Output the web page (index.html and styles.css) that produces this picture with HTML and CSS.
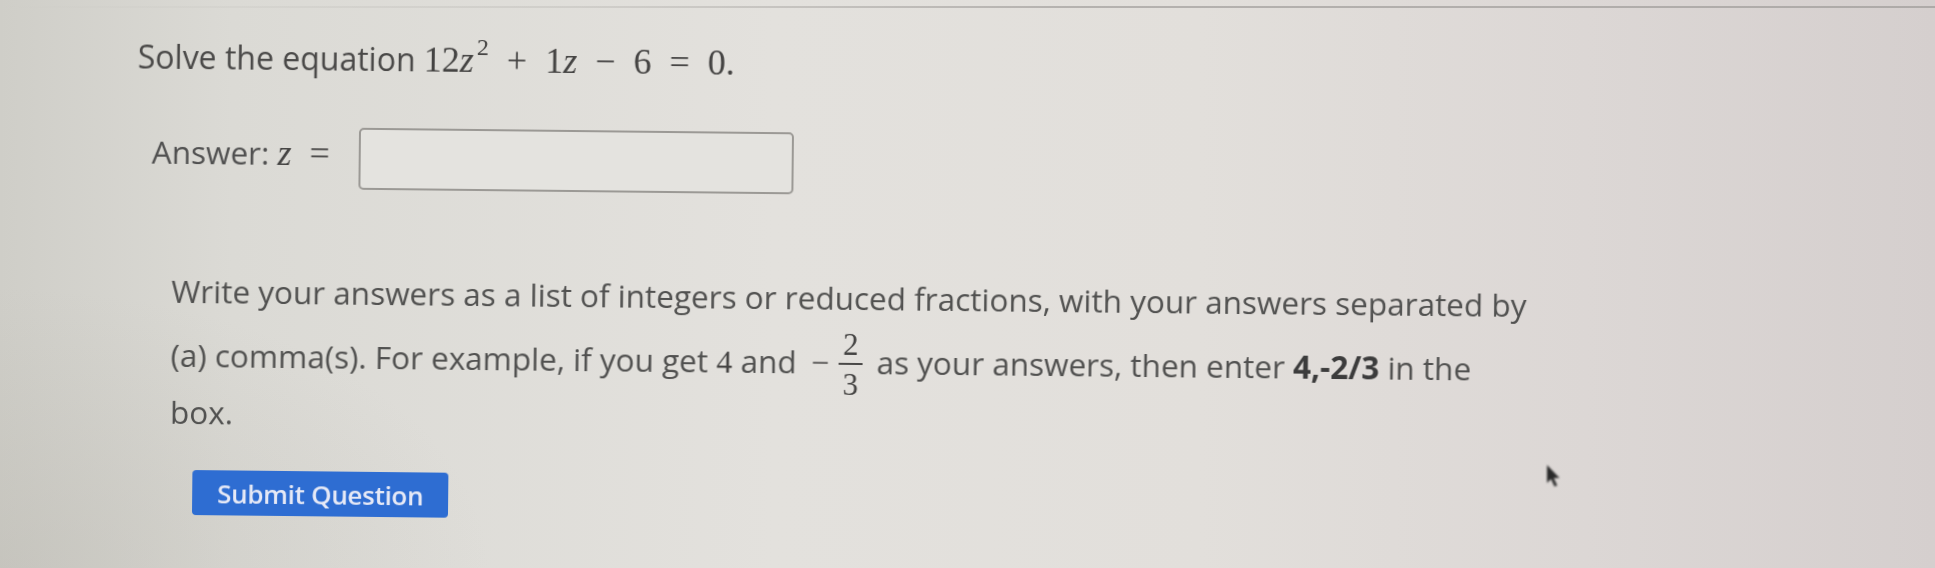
FILE: index.html
```html
<!DOCTYPE html>
<html lang="en">
<head>
<meta charset="utf-8">
<title>Solve the equation</title>
<link rel="stylesheet" href="styles.css">
</head>
<body>
<div class="page">
  <div class="topline"></div>
  <main class="question">
    <p class="prompt">Solve the equation <span class="math"><span class="mn">12</span><span class="mi">z</span><span class="sup">2</span><span class="mo">+</span><span class="mn">1</span><span class="mi">z</span><span class="mo">−</span><span class="mn">6</span><span class="mo">=</span><span class="mn">0</span>.</span></p>
    <div class="answer-row">
      <span class="label">Answer: <span class="math"><span class="mi">z</span><span class="mo">=</span></span></span>
      <input class="answer-box" type="text" aria-label="Answer">
    </div>
    <p class="help">Write your answers as a list of integers or reduced fractions, with your answers separated by<br>(a) comma(s). For example, if you get <span class="math"><span class="mn">4</span></span> and <span class="math"><span class="mo neg">−</span><span class="frac"><span class="num">2</span><span class="den">3</span></span></span> as your answers, then enter <b>4,-2/3</b> in the<br>box.</p>
    <button class="submit" type="button">Submit Question</button>
  </main>
  <svg class="cursor" width="16" height="25" viewBox="0 0 16 25" aria-hidden="true">
    <path d="M1 1 L1 19 L5 15 L8.5 22.5 L11.2 21.4 L7.8 14 L13.5 14 Z" fill="#2a2a2a"/>
  </svg>
</div>
</body>
</html>
```
FILE: styles.css
```css
html, body {
  margin: 0;
  padding: 0;
}
body {
  width: 1935px;
  height: 568px;
  overflow: hidden;
  font-family: "Open Sans", "Liberation Sans", sans-serif;
  color: #4d4c4b;
}
.page {
  position: relative;
  width: 1935px;
  height: 568px;
  background:
    radial-gradient(ellipse 700px 400px at 0% 100%, rgba(180,178,170,0.35), rgba(180,178,170,0) 70%),
    linear-gradient(90deg, #cfcec8 0%, #dbdad5 12%, #e3e1dd 40%, #e2dfdb 62%, #dcd7d5 82%, #d5cfce 100%);
  overflow: hidden;
}
.topline {
  height: 2px;
  margin-top: 6px;
  background: linear-gradient(90deg, rgba(170,168,164,0) 0%, rgba(170,168,164,0.3) 30%, #b5b2af 55%, #aeaaa8 100%);
}
.question {
  transform: rotate(0.6deg);
  transform-origin: 0 0;
  filter: blur(0.5px);
}
.prompt {
  margin: 25px 0 0 138px;
  font-size: 32px;
  line-height: 44px;
  color: #4a4948;
}
.math {
  font-family: "Liberation Serif", "DejaVu Serif", serif;
  font-size: 36px;
  color: #454443;
}
.mi {
  font-style: italic;
}
.sup {
  font-size: 24px;
  line-height: 0;
  vertical-align: 17px;
  margin-left: 3px;
}
.mo {
  margin: 0 0.5em;
}
.answer-row {
  display: flex;
  align-items: center;
  margin: 47px 0 0 153px;
}
.label {
  font-size: 31.5px;
  margin-bottom: 12px;
  margin-right: 29px;
  color: #505050;
}
.label .mo {
  margin-right: 0;
}
.answer-box {
  width: 435px;
  height: 62px;
  box-sizing: border-box;
  border: 2px solid #9b9995;
  border-radius: 5px;
  background: #e4e3df;
  margin: 0;
  padding: 0;
}
.help {
  margin: 75px 0 0 174px;
  font-size: 31.5px;
  line-height: 56px;
  color: #515150;
}
.help .math {
  font-size: 32px;
}
.help .mo.neg {
  margin: 0 0.3em 0 0.2em;
}
.frac {
  display: inline-flex;
  flex-direction: column;
  align-items: center;
  vertical-align: 19px;
  line-height: 31px;
  font-size: 31px;
  margin: 0 6px -15px 0;
}
.num {
  padding: 3px 4px 3px;
  border-bottom: 2px solid #4a4948;
}
.den {
  padding: 4px 4px 0;
}
.help b {
  font-weight: 700;
  color: #3c3c3c;
}
.submit {
  display: block;
  margin: 30px 0 0 197px;
  height: 45px;
  padding: 0 25px;
  border: none;
  border-radius: 4px;
  background: #2e6dd2;
  color: #e6e9f6;
  font-family: "Open Sans", "Liberation Sans", sans-serif;
  font-size: 26px;
  font-weight: 600;
  letter-spacing: -0.3px;
}
.cursor {
  position: absolute;
  left: 1546px;
  top: 464px;
  filter: blur(0.9px);
}
```
